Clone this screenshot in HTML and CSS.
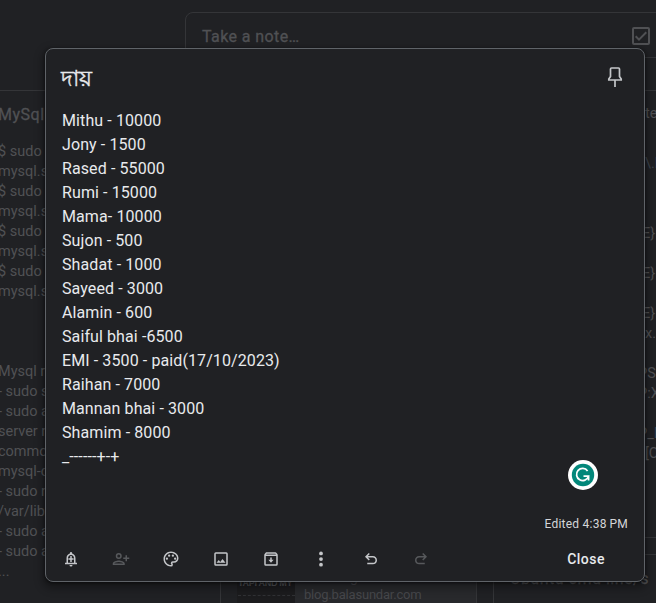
FILE: index.html
```html
<!DOCTYPE html>
<html lang="en">
<head>
<meta charset="utf-8">
<title>Keep</title>
<link rel="stylesheet" href="styles.css">
</head>
<body>
<main class="board">
  <div class="composer">
    <span>Take a note…</span>
    <svg class="check" viewBox="0 0 24 24"><path d="M19 3H5a2 2 0 0 0-2 2v14a2 2 0 0 0 2 2h14a2 2 0 0 0 2-2V5a2 2 0 0 0-2-2zm0 16H5V5h14v14zM17.99 9l-1.41-1.42-6.59 6.59-2.58-2.57-1.42 1.41 4 3.99z"/></svg>
  </div>
  <div class="columns">
    <article class="card card-left">
      <h2>MySql</h2>
      <p>$ sudo<br>mysql.s<br>$ sudo<br>mysql.s<br>$ sudo<br>mysql.s<br>$ sudo<br>mysql.s<br><br><br><br>Mysql r<br>- sudo s<br>- sudo a<br>server r<br>commo<br>mysql-c<br>- sudo r<br>/var/lib<br>- sudo a<br>- sudo a<br>...</p>
    </article>
    <div class="column-mid">
      <div class="link-card">
        <div class="thumb"><span>TAPI AND MY</span></div>
        <div class="link-text"><span class="link-title">g</span><span>blog.balasundar.com</span></div>
      </div>
    </div>
    <div class="column-right">
      <article class="card card-tall">
        <p class="frag frag-title">te</p>
        <p class="frag frag-blue">\.l</p>
        <p class="frag frag-braces">E}<br><br>E}<br><br>E}</p>
        <p class="frag frag-ext">x.</p>
        <p class="frag frag-codes">PS<br>P:X<br><br>P_<b>I</b></p>
        <p class="frag">[C</p>
      </article>
      <article class="card card-next"><h2>Ubuntu cmd line/s</h2></article>
    </div>
  </div>
</main>

<section class="modal">
  <header class="modal-head">
    <h1 lang="bn">দায়</h1>
    <svg class="pin" viewBox="0 0 24 24"><path d="M8.500 3H15.500Q16.500 3 16.500 4V11.500L18.200 14V15H5.800V14L7.500 11.500V4Q7.500 3 8.500 3ZM12 15V22"/></svg>
  </header>
  <div class="note">Mithu - 10000<br>Jony - 1500<br>Rased - 55000<br>Rumi - 15000<br>Mama- 10000<br>Sujon - 500<br>Shadat - 1000<br>Sayeed - 3000<br>Alamin - 600<br>Saiful bhai -6500<br>EMI - 3500 - paid(17/10/2023)<br>Raihan - 7000<br>Mannan bhai - 3000<br>Shamim - 8000<br>_------+-+</div>
  <div class="edited">Edited 4:38&#8201;PM</div>
  <footer class="toolbar">
    <svg viewBox="0 0 24 24"><path d="M18 17v-6c0-3.070-1.630-5.640-4.500-6.320V4a1.500 1.500 0 0 0-3 0v.68C7.640 5.360 6 7.920 6 11v6H4v2h16v-2h-2zm-2 0H8v-6c0-2.480 1.510-4.500 4-4.500s4 2.020 4 4.500v6zm-4 5a2 2 0 0 0 2-2h-4a2 2 0 0 0 2 2zM11 8h2v3h2.500v2H13v3h-2v-3H8.500v-2H11z"/></svg>
    <svg class="off" viewBox="0 0 24 24"><path d="M9 12a4 4 0 1 0 0-8 4 4 0 0 0 0 8zm0-6a2 2 0 1 1 0 4 2 2 0 0 1 0-4zm0 8c-2.670 0-8 1.340-8 4v2h16v-2c0-2.660-5.330-4-8-4zm-6 4c.2-.71 3.300-2 6-2s5.800 1.290 6 2H3zM20 10V7h-2v3h-3v2h3v3h2v-3h3v-2z"/></svg>
    <svg viewBox="0 0 24 24"><path d="M12 22C6.490 22 2 17.510 2 12S6.490 2 12 2s10 4.040 10 9c0 3.310-2.690 6-6 6h-1.770a.5.5 0 0 0-.5.5c0 .12.050.23.130.33.410.47.640 1.060.640 1.670A2.500 2.500 0 0 1 12 22zm0-18c-4.410 0-8 3.590-8 8s3.590 8 8 8a.5.5 0 0 0 .5-.5.540.54 0 0 0-.14-.35c-.41-.46-.63-1.050-.63-1.650a2.500 2.500 0 0 1 2.500-2.500H16c2.210 0 4-1.790 4-4 0-3.860-3.590-7-8-7z"/><circle cx="6.500" cy="11.500" r="1.500"/><circle cx="9.500" cy="7.500" r="1.500"/><circle cx="14.500" cy="7.500" r="1.500"/><circle cx="17.500" cy="11.500" r="1.500"/></svg>
    <svg viewBox="0 0 24 24"><path d="M19 5v14H5V5h14m0-2H5a2 2 0 0 0-2 2v14a2 2 0 0 0 2 2h14a2 2 0 0 0 2-2V5a2 2 0 0 0-2-2zm-5 9-3 3.870-2-2.440L6 17h12z"/></svg>
    <svg viewBox="0 0 24 24"><path d="M20.540 5.230l-1.390-1.680A1.500 1.500 0 0 0 18 3H6c-.47 0-.88.21-1.160.55L3.460 5.230C3.170 5.570 3 6.020 3 6.500V19a2 2 0 0 0 2 2h14a2 2 0 0 0 2-2V6.500c0-.48-.17-.93-.46-1.270zM6.240 5h11.520l.83 1H5.420zM5 19V8h14v11zm8-9v3h2.500L12 17l-3.500-4H11v-3z"/></svg>
    <svg viewBox="0 0 24 24"><circle cx="12" cy="4.500" r="2.500"/><circle cx="12" cy="12" r="2.500"/><circle cx="12" cy="19.500" r="2.500"/></svg>
    <svg viewBox="0 0 24 24"><path d="M7 19v-2h7.500c2 0 3.500-1.500 3.500-3.500S16.500 10 14.500 10H7.800l2.600 2.600L9 14 4 9l5-5 1.400 1.400L7.800 8h6.700c3.100 0 5.500 2.400 5.500 5.500S17.600 19 14.500 19z"/></svg>
    <svg class="off" viewBox="0 0 24 24"><path d="M17 19v-2H9.500C7.500 17 6 15.500 6 13.500S7.500 10 9.500 10h6.700l-2.600 2.600L15 14l5-5-5-5-1.400 1.400L16.200 8H9.500C6.400 8 4 10.400 4 13.500S6.400 19 9.500 19z"/></svg>
    <span class="close">Close</span>
  </footer>
  <svg class="badge" viewBox="0 0 30 30"><circle cx="15" cy="15" r="15" fill="#fff"/><circle cx="15" cy="15" r="11.200" fill="#02877a"/><path d="M19.600 10.900A6.100 6.100 0 1 0 20.500 16.200H15.500M20.600 15.500V20.600" fill="none" stroke="#fff" stroke-width="1.700"/></svg>
</section>
</body>
</html>
```
FILE: styles.css
```css
* { box-sizing: border-box; }
body {
  margin: 0;
  width: 656px;
  height: 603px;
  overflow: hidden;
  position: relative;
  background: #202124;
  font-family: Roboto, "Liberation Sans", sans-serif;
}
h1, h2, p { margin: 0; font-weight: 400; }
.board { height: 603px; overflow: hidden; padding-top: 12px; color: #505154; }
.composer {
  display: flex;
  justify-content: space-between;
  align-items: center;
  width: 600px;
  height: 46px;
  margin-left: 185px;
  padding: 3px 131px 0 16px;
  border: 1px solid #343538;
  border-radius: 8px;
  font: 400 16px/24px Roboto, sans-serif;
  letter-spacing: .4px;
  -webkit-text-stroke: .3px #505154;
}
.check { width: 24px; height: 24px; margin-top: -1px; fill: #505154; }
.columns { display: grid; grid-template-columns: 256px 257px 256px; column-gap: 16px; margin: 32px 0 0 -52px; align-items: start; }
.card { border: 1px solid #343538; border-radius: 8px; }
.card-left { height: 502px; padding: 12px 0 0 50px; border-width: 1px 0 0; white-space: nowrap; }
.card h2 { font: 400 16px/24px Roboto, sans-serif; letter-spacing: .5px; -webkit-text-stroke: .3px #505154; }
.card-left p { margin-top: 15px; font-size: 14.500px; line-height: 20px; }
.column-mid { height: 514px; padding: 478px 0 0; border: solid #343538; border-width: 0 1px; }
.link-card { display: flex; height: 50px; }
.thumb { width: 74px; padding: 0 0 0 17px; background: linear-gradient(#1c1c1e, #1c1c1e) 16px 0 / 58px 50px no-repeat; white-space: nowrap; }
.thumb span { display: block; height: 28px; padding-top: 5px; border-bottom: 1px dashed #303134; font: 700 9px/20px "Liberation Sans", sans-serif; letter-spacing: -.3px; }
.link-text { flex: 1; padding-left: 9px; background: #28292c; font-size: 13px; line-height: 18px; letter-spacing: -.2px; color: #46474b; }
.link-text span { display: block; }
.link-text .link-title { padding-left: 46px; font-size: 14px; }
.column-right { display: flex; flex-direction: column; gap: 16px; }
.card-tall { height: 448px; padding: 13px 0 0 151px; font-size: 14.500px; line-height: 20px; white-space: nowrap; overflow: hidden; }
.frag-title { height: 50px; }
.frag-blue { height: 70px; color: #3c444e; }
.frag-braces { margin-left: -3px; height: 100px; }
.frag-ext { height: 40px; }
.frag-codes { margin-left: -7px; }
.frag-codes b { color: #2d4356; font-weight: 400; }
.card-next { height: 70px; padding: 12px 16px; }
.modal {
  position: absolute;
  left: 45px;
  top: 48px;
  width: 600px;
  height: 534px;
  display: flex;
  flex-direction: column;
  border: 1px solid #5f6368;
  border-radius: 8px;
  background: #202124;
  color: #e8eaed;
  box-shadow: 0 1px 3px rgba(0,0,0,.6), 0 4px 8px 3px rgba(0,0,0,.3);
}
.modal-head { display: flex; justify-content: space-between; padding: 16px 17px 0 15px; height: 60px; }
.modal-head h1 { font-size: 22px; line-height: 28px; -webkit-text-stroke: .4px #e8eaed; }
.pin { width: 24px; height: 24px; margin-top: 0; fill: none; stroke: #c4c6c9; stroke-width: 1.700; }
.note { height: 405px; padding-left: 16px; font-size: 16px; line-height: 24px; letter-spacing: .1px; }
.edited { height: 20px; padding-right: 16px; text-align: right; font-size: 12px; line-height: 20px; letter-spacing: .25px; color: #d4d6d9; }
.toolbar { display: flex; align-items: center; height: 44px; padding: 2px 39px 0 16px; margin-top: 2px; gap: 32px; }
.toolbar svg { width: 18px; height: 18px; fill: #c4c6c9; }
.toolbar .off { fill: #57595c; }
.close { margin-left: auto; font-size: 14px; font-weight: 500; letter-spacing: .5px; }
.badge { position: absolute; left: 522px; top: 411px; width: 30px; height: 30px; }
```
